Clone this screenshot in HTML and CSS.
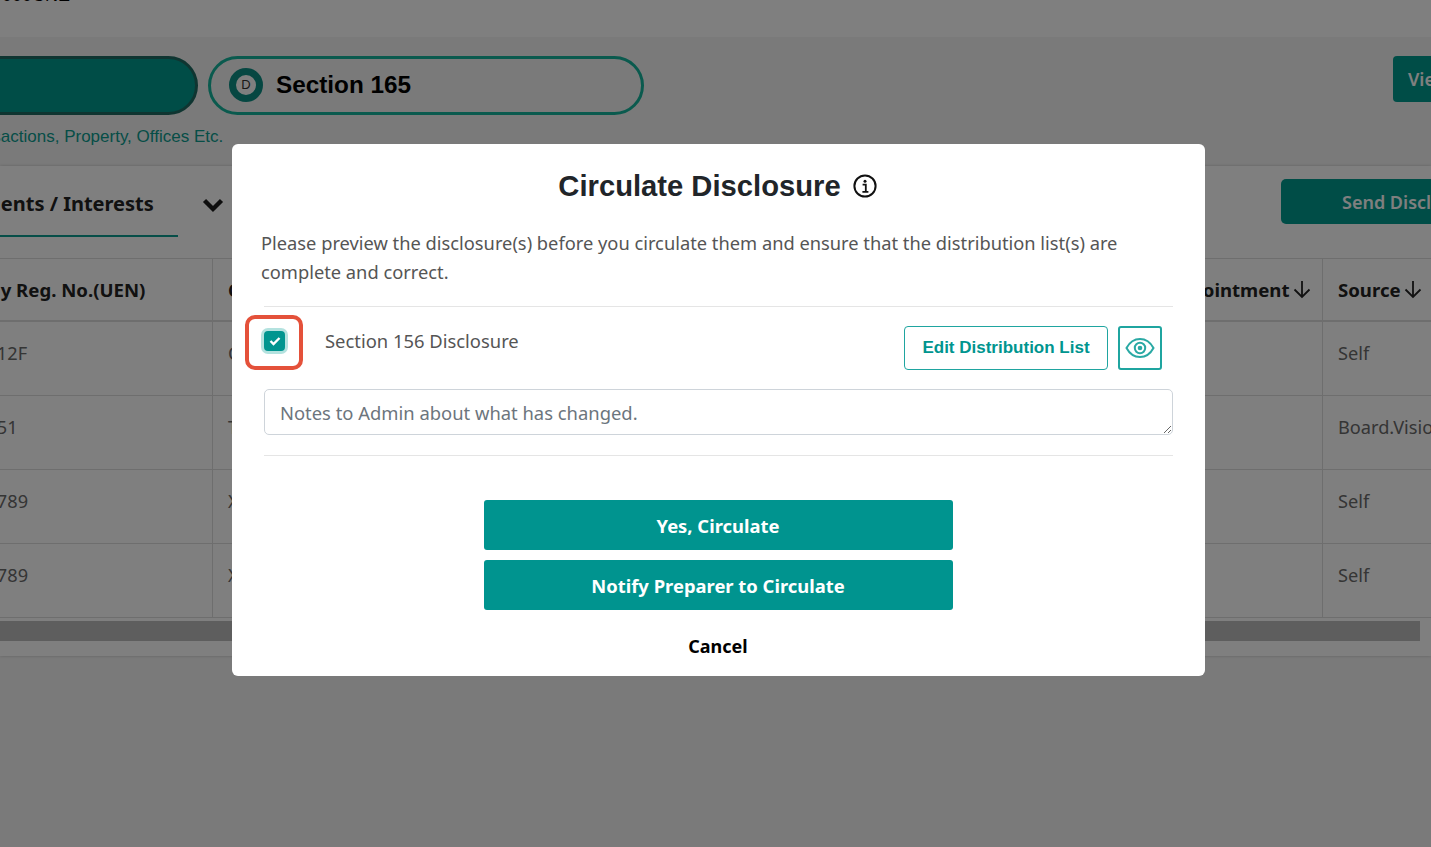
FILE: index.html
```html
<!DOCTYPE html>
<html lang="en">
<head>
<meta charset="utf-8">
<title>Circulate Disclosure</title>
<link rel="stylesheet" href="styles.css">
</head>
<body>
<div class="page">
  <div class="topbar"><span class="topbar-text">S000CNE</span></div>
  <section class="sections">
    <div class="pill-row">
      <div class="pill pill-active"></div>
      <div class="pill">
        <span class="pill-badge">D</span>
        <span class="pill-label">Section 165</span>
      </div>
      <button class="view-btn">View Disclosure</button>
    </div>
    <p class="section-note">Transactions, Property, Offices Etc.</p>
  </section>
  <section class="card">
    <div class="tabs">
      <div class="tab">Appointments / Interests</div>
      <svg class="chevron" width="22" height="16" viewBox="0 0 22 16"><path d="M2.500 3.500l8.500 8.500 8.500-8.500" fill="none" stroke="#1c1c1c" stroke-width="4.400"/></svg>
      <button class="send-btn">Send Disclosure</button>
    </div>
    <div class="table">
      <div class="cell head">Company Reg. No.(UEN)</div>
      <div class="cell head">Company Name</div>
      <div class="cell head">Date of Appointment<svg class="arrow" width="18" height="20" viewBox="0 0 18 20"><path d="M9 2v16M1.500 10.500l7.500 7.500 7.500-7.500" fill="none" stroke="#222" stroke-width="1.800"/></svg></div>
      <div class="cell head">Source<svg class="arrow" width="18" height="20" viewBox="0 0 18 20"><path d="M9 2v16M1.500 10.500l7.500 7.500 7.500-7.500" fill="none" stroke="#222" stroke-width="1.800"/></svg></div>

      <div class="cell">201812312F</div><div class="cell">Company A</div><div class="cell"></div><div class="cell">Self</div>
      <div class="cell">201812351</div><div class="cell">Tech Pte Ltd</div><div class="cell"></div><div class="cell">Board.Vision</div>
      <div class="cell">0123456789</div><div class="cell">Xyz Pte Ltd</div><div class="cell"></div><div class="cell">Self</div>
      <div class="cell">0123456789</div><div class="cell">Xyz Pte Ltd</div><div class="cell"></div><div class="cell">Self</div>
    </div>
    <div class="scrollbar"><div class="scroll-thumb"></div></div>
  </section>
</div>

<div class="overlay">
  <div class="modal">
    <h2 class="modal-title">Circulate Disclosure
      <svg class="info" width="24" height="24" viewBox="0 0 24 24"><circle cx="12" cy="12" r="10.600" fill="none" stroke="#111" stroke-width="2"/><circle cx="12" cy="7.200" r="1.500" fill="#111"/><path d="M9.600 10.600h3.200v7M9.400 17.800h6" fill="none" stroke="#111" stroke-width="1.800"/></svg>
    </h2>
    <p class="modal-text">Please preview the disclosure(s) before you circulate them and ensure that the distribution list(s) are complete and correct.</p>
    <div class="disclosure">
      <div class="row">
        <span class="check"><svg width="12" height="10" viewBox="0 0 12 10"><path d="M1.500 5l3 3 6-6" fill="none" stroke="#fff" stroke-width="2.400"/></svg></span>
        <span class="row-label">Section 156 Disclosure</span>
        <button class="edit-btn">Edit Distribution List</button>
        <button class="eye-btn" aria-label="Preview">
          <svg width="30" height="22" viewBox="0 0 30 22"><path d="M1.500 11C5 4.500 9.500 2 15 2s10 2.500 13.500 9C25 17.500 20.500 20 15 20S5 17.500 1.500 11z" fill="none" stroke="#2aa9a4" stroke-width="2"/><circle cx="15" cy="11" r="5.200" fill="none" stroke="#2aa9a4" stroke-width="2"/><circle cx="15" cy="11" r="2.300" fill="#2aa9a4"/></svg>
        </button>
      </div>
      <textarea class="notes" placeholder="Notes to Admin about what has changed."></textarea>
    </div>
    <div class="actions">
      <button class="primary">Yes, Circulate</button>
      <button class="primary">Notify Preparer to Circulate</button>
      <button class="cancel">Cancel</button>
    </div>
    <div class="highlight"></div>
  </div>
</div>
</body>
</html>
```
FILE: styles.css
```css
* { box-sizing: border-box; }
html, body { margin: 0; height: 100%; }
body { font-family: "Noto Sans", "Open Sans", sans-serif; overflow: hidden; background: #f4f4f4; }
button { font-family: inherit; cursor: pointer; }

.page { width: 1431px; height: 847px; overflow: hidden; background: #f4f4f4; }

.topbar { height: 37px; background: #fff; overflow: hidden; }
.topbar-text { display: block; margin: -15px 0 0 -10px; font: 18px/20px "Liberation Sans", sans-serif; color: #000; }

.sections { height: 129px; padding-top: 19px; }
.pill-row { display: flex; align-items: flex-start; gap: 10px; }
.pill { width: 436px; height: 59px; flex: none; border: 3px solid #14b59c; border-radius: 30px; display: flex; align-items: center; gap: 13px; padding: 0 0 2px 18px; }
.pill-active { width: 400px; margin-left: -202px; background: #009a8e; border-color: #1f6b63; }
.pill-badge { width: 34px; height: 34px; border-radius: 50%; border: 7px solid #0c8f85; background: #fff; display: flex; align-items: center; justify-content: center; font: 13px "Liberation Sans", sans-serif; color: #333; }
.pill-label { font: bold 24.300px "Liberation Sans", sans-serif; color: #000; }
.view-btn { margin-left: auto; margin-right: -120px; width: 158px; height: 46px; background: #009a8e; border: 0; border-radius: 4px; color: #fff; font-size: 18px; font-weight: 600; text-align: left; padding-left: 15px; }
.section-note { margin: 11px 0 0 -42px; font: 17px/22px "Liberation Sans", sans-serif; color: #0c9c8f; white-space: nowrap; }

.card { height: 490px; background: #fff; box-shadow: 0 0 3px rgba(0,0,0,.2); }
.tabs { height: 93px; display: flex; align-items: flex-start; border-bottom: 1px solid #ddd; }
.tab { margin-left: -98px; width: 276px; height: 71px; padding-top: 23px; font-size: 20px; line-height: 30px; font-weight: 700; color: #222; white-space: nowrap; border-bottom: 2px solid #0d9d90; flex: none; }
.chevron { margin: 31px 0 0 24px; flex: none; }
.send-btn { margin: 13px -150px 0 auto; width: 300px; height: 45px; background: #009a8e; border: 0; border-radius: 5px; color: #fff; font-size: 18px; font-weight: 600; text-align: left; padding-left: 61px; }

.table { display: grid; grid-template-columns: 304px 866px 244px 200px; grid-template-rows: 63px repeat(4, 74px); margin-left: -91px; width: 1614px; }
.cell { display: flex; align-items: flex-start; padding: 19px 15px 0 15px; font-size: 18.200px; line-height: 25px; color: #6a6a6a; border-bottom: 1px solid #ddd; border-right: 1px solid #ddd; white-space: nowrap; overflow: hidden; }
.cell.head { align-items: center; padding-top: 0; padding-bottom: 1px; font-size: 18.600px; font-weight: 700; color: #222; border-bottom-width: 2px; }
.arrow { margin-left: 3px; flex: none; }

.scrollbar { height: 20px; margin-top: 3px; }
.scroll-thumb { width: 1420px; height: 20px; background: #bdbdbd; }

.overlay { position: fixed; inset: 0; background: rgba(0,0,0,.5); }
.modal { position: absolute; left: 232px; top: 144px; width: 973px; height: 532px; background: #fff; border-radius: 6px; padding: 22px 32px 0 29px; }
.modal-title { margin: 0; display: flex; align-items: center; justify-content: center; gap: 12px; height: 40px; padding-left: 1px; font: bold 29.200px "Liberation Sans", sans-serif; color: #212529; }
.modal-text { margin: 22px 0 0; font-size: 18.300px; line-height: 29px; color: #555; }
.disclosure { margin: 20px 0 0 3px; border-top: 1px solid #e5e5e5; border-bottom: 1px solid #e5e5e5; height: 150px; }
.row { display: flex; align-items: flex-start; height: 82px; padding-top: 19px; }
.check { flex: none; width: 21px; height: 20px; margin-top: 5px; border-radius: 4px; background: #00958f; box-shadow: 0 0 0 3px #b4e2df; display: flex; align-items: center; justify-content: center; }
.row-label { flex: none; margin: 0 0 0 40px; font-size: 18.400px; line-height: 30px; color: #555; }
.edit-btn { margin-left: auto; width: 204px; height: 44px; border: 1px solid #1fa5a0; border-radius: 4px; background: #fff; font: bold 17px "Liberation Sans", sans-serif; color: #00958f; padding: 0; }
.eye-btn { margin: 0 11px 0 10px; width: 44px; height: 44px; border: 2px solid #1fa5a0; border-radius: 3px; background: #fff; padding: 0; display: flex; align-items: center; justify-content: center; }
.notes { display: block; width: 909px; height: 46px; border: 1px solid #ced4da; border-radius: 5px; padding: 9px 15px 7px; font: 18.400px/28px "Noto Sans", sans-serif; color: #555; outline: 0; }
.notes::placeholder { color: #6c757d; opacity: 1; }

.actions { margin: 44px 0 0 2px; display: flex; flex-direction: column; align-items: center; gap: 10px; }
.primary { width: 469px; height: 50px; background: #00948f; border: 0; border-radius: 3px; color: #fff; font-size: 18.400px; font-weight: 700; padding: 0; }
.cancel { margin-top: 8px; height: 36px; border: 0; background: none; color: #000; font-size: 18px; font-weight: 700; padding: 0 10px; }

.highlight { position: absolute; left: 13px; top: 171px; width: 58px; height: 55px; border: 4px solid #e4513a; border-radius: 10px; }
```
